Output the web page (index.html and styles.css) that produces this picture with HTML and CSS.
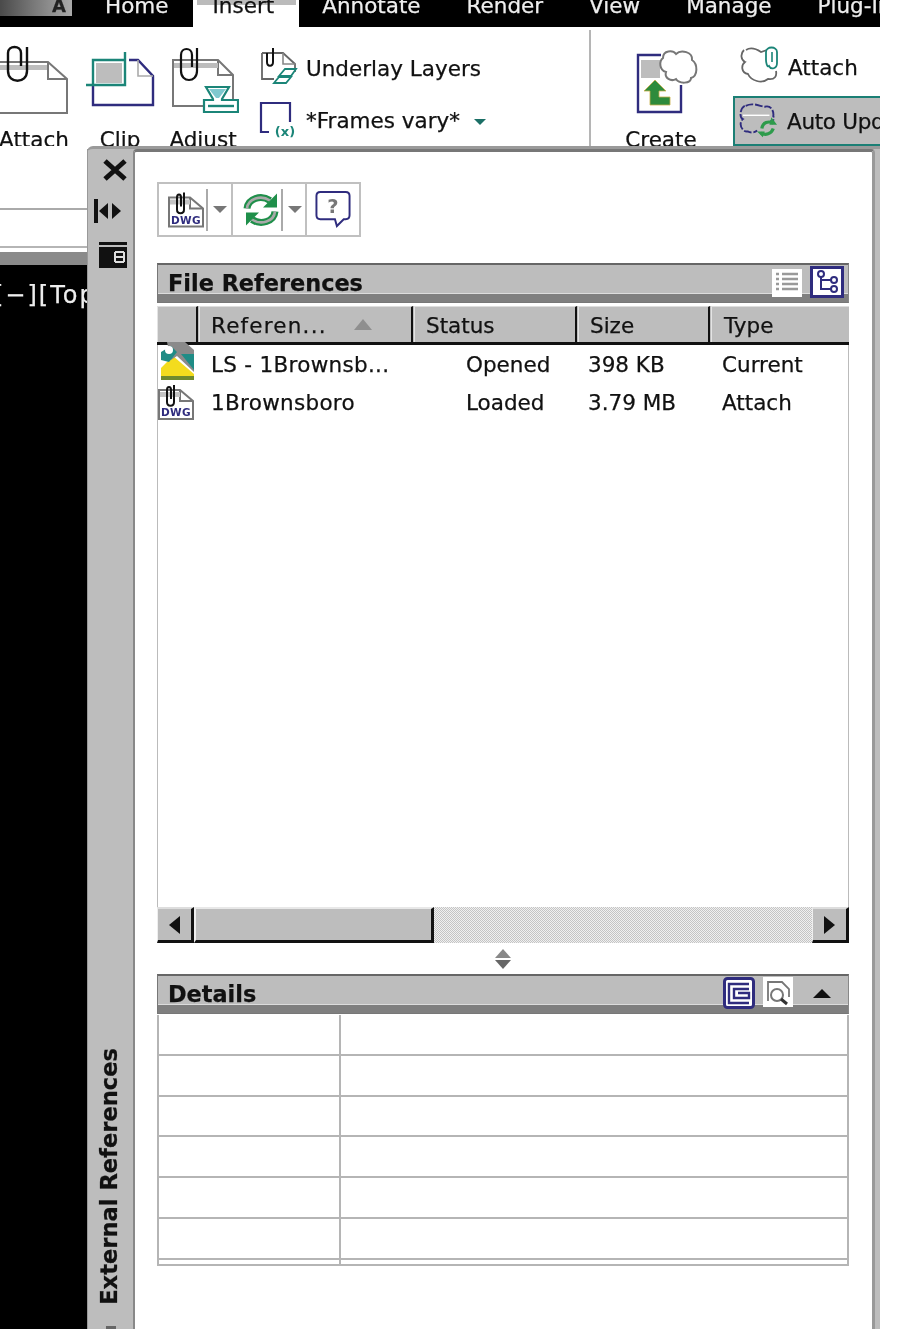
FILE: index.html
```
<!DOCTYPE html>
<html lang="en">
<head>
<meta charset="utf-8">
<title>External References</title>
<link rel="stylesheet" href="styles.css">
</head>
<body>
<svg class="defs" width="0" height="0" aria-hidden="true">
  <symbol id="dwg" viewBox="0 0 36 36">
    <path d="M1 6H22L35 17V35H1Z" fill="#fff" stroke="#777" stroke-width="2"/>
    <path d="M22 6V17H35" fill="none" stroke="#777" stroke-width="2"/>
    <rect x="2" y="8" width="20" height="5" fill="#c4c4c4"/>
    <path d="M16 1V18C16 23 9 23 9 18V6C9 2 13 2 13 6V15" fill="none" stroke="#111" stroke-width="2"/>
    <text x="18" y="32" class="dwg-text" text-anchor="middle">DWG</text>
  </symbol>
</svg>
<div class="stage">
  <nav class="tabs">
    <div class="logo"><span class="logo-a">A</span></div>
    <span class="tab">Home</span>
    <span class="tab tab-active">Insert</span>
    <span class="tab">Annotate</span>
    <span class="tab">Render</span>
    <span class="tab">View</span>
    <span class="tab">Manage</span>
    <span class="tab">Plug-In</span>
  </nav>

  <section class="ribbon">
    <div class="big-btn">
      <svg class="big-icon" viewBox="-2 44 72 72">
        <path d="M0 62H48L67 79V113H0" fill="#fff" stroke="#777" stroke-width="2"/>
        <path d="M48 62V79H67" fill="none" stroke="#777" stroke-width="2"/>
        <rect x="0" y="65" width="47" height="5" fill="#bdbdbd"/>
        <path d="M27 47V71C27 84 8 84 8 71V53C8 45 21 45 21 53V66" fill="none" stroke="#111" stroke-width="2.4"/>
      </svg>
      <span>Attach</span>
    </div>
    <div class="big-btn">
      <svg class="big-icon" viewBox="84 44 72 72">
        <path d="M93 85V105H153V76L138 60H129" fill="#fff" stroke="#2f2c7e" stroke-width="2.4"/>
        <path d="M138 60V76H153" fill="none" stroke="#aaa" stroke-width="1.6"/>
        <rect x="96" y="63" width="26" height="20" fill="#bdbdbd"/>
        <path d="M93 85V60H125M125 52V85H86" fill="none" stroke="#1b8578" stroke-width="2.4"/>
      </svg>
      <span>Clip</span>
    </div>
    <div class="big-btn">
      <svg class="big-icon" viewBox="167 44 72 72">
        <path d="M173 60H218L233 75V106H173Z" fill="#fff" stroke="#777" stroke-width="2"/>
        <path d="M218 60V75H233" fill="none" stroke="#777" stroke-width="2"/>
        <rect x="174" y="63" width="44" height="5" fill="#bdbdbd"/>
        <path d="M197 48V71C197 83 181 83 181 71V55C181 47 192 47 192 55V67" fill="none" stroke="#111" stroke-width="2.2"/>
        <path d="M206 87H229L222 99V100H238V112H204V100H213V99Z" fill="#fff" stroke="#1b8578" stroke-width="2.2"/>
        <path d="M209 89H226L219 98H216Z" fill="#7fc9cf"/>
        <path d="M208 106H234" stroke="#1b8578" stroke-width="2.4"/>
      </svg>
      <span>Adjust</span>
    </div>
    <div class="small-col">
      <div class="small-row">
        <svg class="small-icon" viewBox="258 44 40 40">
          <path d="M262 53H283L295 64V72M274 79H262V53" fill="#fff" stroke="#666" stroke-width="1.8"/>
          <path d="M283 53V64H295" fill="none" stroke="#888" stroke-width="1.6"/>
          <path d="M273 48V62C273 67 267 67 267 62V53" fill="none" stroke="#111" stroke-width="2"/>
          <path d="M279 76L285 69H296L291 76ZM274 83L279 77H291L286 83Z" fill="#fff" stroke="#1b8578" stroke-width="1.8"/>
        </svg>
        <span class="small-label">Underlay Layers</span>
      </div>
      <div class="small-row">
        <svg class="small-icon small-icon-low" viewBox="258 100 40 38">
          <path d="M269 132H261V103H290V122" fill="none" stroke="#2f2c7e" stroke-width="2.2"/>
          <text x="285" y="136" class="var-text" text-anchor="middle">(x)</text>
        </svg>
        <span class="small-label">*Frames vary*</span>
        <i class="tri-teal"></i>
      </div>
    </div>
    <div class="rib-divider"></div>
    <div class="big-btn big-create">
      <svg class="big-icon" viewBox="622 44 76 72">
        <path d="M680 85V112H637V55H660" fill="#fff" stroke="#2f2c7e" stroke-width="2.4"/>
        <rect x="640" y="60" width="19" height="18" fill="#bdbdbd"/>
        <path d="M662 58C662 50 672 50 675 54C680 49 692 52 691 60C697 64 697 76 690 78C690 84 678 84 675 79C670 82 663 78 665 72C658 70 658 61 662 58Z" fill="#fff" stroke="#777" stroke-width="2"/>
        <path d="M654 80L643 91H649V105H669V97H658V91H665Z" fill="#2e8b3c" stroke="#c8b04b" stroke-width=".8"/>
      </svg>
      <span>Create</span>
    </div>
    <div class="small-col small-col-2">
      <div class="small-row attach-row">
        <svg class="small-icon wide" viewBox="740 46 40 38">
          <path d="M746 50C752 46 758 50 761 52L767 50M744 50C740 54 741 60 745 62C741 65 741 73 748 74C751 81 762 84 768 79C775 80 777 76 776 71" fill="none" stroke="#666" stroke-width="1.8"/>
          <path d="M766 52C766 46 777 46 777 52V63C777 69 771 70 769 66C767 68 766 62 766 60Z" fill="#fff" stroke="#1b8578" stroke-width="1.8"/>
          <path d="M772 52V62" stroke="#1b8578" stroke-width="1.6"/>
        </svg>
        <span class="attach-label">Attach</span>
      </div>
      <div class="small-row auto-row">
        <svg class="small-icon wide" viewBox="739 100 42 40">
          <path d="M746 104C754 100 762 105 766 105C772 103 776 109 775 115C777 118 775 120 772 120M745 104C740 107 739 116 743 118C738 122 742 132 748 131C752 133 756 132 758 130" fill="none" stroke="#2f2c7e" stroke-width="2" stroke-dasharray="8 2"/>
          <path d="M743 114H771" stroke="#fff" stroke-width="1.5"/>
          <path d="M763 128C764 121 770 120 775 122M775 128C773 134 767 135 762 133" fill="none" stroke="#2e9b4c" stroke-width="3.4"/>
          <path d="M773 116L779 124H771ZM764 137L758 131H766Z" fill="#2e9b4c"/>
        </svg>
        <span class="auto-label">Auto Update</span>
      </div>
    </div>
  </section>

  <main class="work">
    <div class="drawing">
      <div class="draw-white"></div>
      <div class="draw-band"></div>
      <div class="draw-black"><span class="viewport-label">[−][Top]</span></div>
    </div>
    <div class="palette">
      <aside class="strip">
        <svg class="strip-icon strip-close" viewBox="0 0 24 22"><path d="M2 2L22 20M22 2L2 20" stroke="#111" stroke-width="5"/></svg>
        <svg class="strip-icon strip-auto" viewBox="0 0 30 26"><path d="M3 1V25" stroke="#111" stroke-width="4"/><path d="M15 5L6 13L15 21ZM19 5L28 13L19 21Z" fill="#111"/></svg>
        <svg class="strip-icon strip-prop" viewBox="0 0 30 26"><rect y="0" width="28" height="3" fill="#111"/><rect y="5" width="28" height="21" fill="#111"/><path d="M16 10H25M16 15H25M16 20H25M16 10V20M25 10V20" stroke="#ddd" stroke-width="2" fill="none"/></svg>
        <span class="strip-title">External References</span>
        <i class="strip-mark"></i>
      </aside>
      <div class="pane">
        <div class="toolbar">
          <div class="tool tool-a">
            <svg class="tool-icon"><use href="#dwg"/></svg>
            <i class="tool-sep"></i><i class="tri-gray"></i>
          </div>
          <div class="tool tool-b">
            <svg class="tool-icon" viewBox="0 0 36 36">
              <path d="M4 17C5 7 18 3 27 9" fill="none" stroke="#1f8f4a" stroke-width="7"/>
              <path d="M4 17C5 7 18 3 27 9" fill="none" stroke="#a9a9a9" stroke-width="2.6"/>
              <path d="M34 2V16H20Z" fill="#1f8f4a"/>
              <path d="M32 20C31 30 18 34 9 28" fill="none" stroke="#1f8f4a" stroke-width="7"/>
              <path d="M32 20C31 30 18 34 9 28" fill="none" stroke="#a9a9a9" stroke-width="2.6"/>
              <path d="M3 34V21H16Z" fill="#1f8f4a"/>
            </svg>
            <i class="tool-sep"></i><i class="tri-gray"></i>
          </div>
          <div class="tool tool-c">
            <svg class="tool-icon" viewBox="0 0 36 38">
              <path d="M5 1H31Q35 1 35 5V25Q35 29 31 29H29L22 36L20 29H5Q1 29 1 25V5Q1 1 5 1Z" fill="#fff" stroke="#2f2c7e" stroke-width="2"/>
              <text x="18" y="23" class="help-text" text-anchor="middle">?</text>
            </svg>
          </div>
        </div>

        <div class="section-head head-files">
          <span class="section-title">File References</span>
          <span class="head-tools">
            <svg class="hbtn hbtn-list" viewBox="0 0 30 28"><rect width="30" height="28" fill="#fff"/><path d="M4 5H7M10 5H26M4 10H7M10 10H26M4 15H7M10 15H26M4 20H7M10 20H26" stroke="#999" stroke-width="2.6"/></svg>
            <svg class="hbtn hbtn-tree" viewBox="0 0 34 32"><rect x="1.5" y="1.5" width="31" height="29" fill="#fff" stroke="#2f2c7e" stroke-width="3"/><path d="M11 9V23H21M11 14H21" fill="none" stroke="#2f2c7e" stroke-width="2"/><circle cx="11" cy="8" r="3" fill="#fff" stroke="#2f2c7e" stroke-width="2"/><circle cx="24" cy="14" r="3" fill="#fff" stroke="#2f2c7e" stroke-width="2"/><circle cx="24" cy="23" r="3" fill="#fff" stroke="#2f2c7e" stroke-width="2"/></svg>
          </span>
        </div>

        <div class="cols">
          <div class="col col-0"></div>
          <div class="col col-1"><span class="col-ref">Referen...</span><i class="sort-tri"></i></div>
          <div class="col col-2">Status</div>
          <div class="col col-3">Size</div>
          <div class="col col-4">Type</div>
        </div>

        <div class="list">
          <div class="row">
            <svg class="row-icon row-icon-ls" viewBox="0 0 36 38">
              <path d="M2 36V26L14 14L35 32V36Z" fill="#f3dc1e"/>
              <path d="M2 34H35V38H2Z" fill="#6f8a2e"/>
              <path d="M8 0H26L35 8V30L18 14L12 18Z" fill="#8a8a8a"/>
              <path d="M2 10L12 4L18 10L10 20L2 18ZM22 12L35 12V28Z" fill="#1f8c86"/>
              <circle cx="10" cy="8" r="4" fill="#fff"/>
            </svg>
            <span class="cell cell-name">LS - 1Brownsb...</span>
            <span class="cell cell-status">Opened</span>
            <span class="cell cell-size">398 KB</span>
            <span class="cell cell-type">Current</span>
          </div>
          <div class="row">
            <svg class="row-icon"><use href="#dwg"/></svg>
            <span class="cell cell-name">1Brownsboro</span>
            <span class="cell cell-status">Loaded</span>
            <span class="cell cell-size">3.79 MB</span>
            <span class="cell cell-type">Attach</span>
          </div>
        </div>

        <div class="scrollbar">
          <div class="sb-btn"><i class="arrow-left"></i></div>
          <div class="sb-thumb"></div>
          <div class="sb-track"></div>
          <div class="sb-btn"><i class="arrow-right"></i></div>
        </div>

        <div class="splitter"><i class="split-up"></i><i class="split-down"></i></div>

        <div class="section-head head-details">
          <span class="section-title">Details</span>
          <span class="head-tools head-tools-details">
            <svg class="dbtn" viewBox="0 0 32 32"><rect x="1.5" y="1.5" width="29" height="29" rx="3" fill="#fff" stroke="#2f2c7e" stroke-width="3"/><path d="M26 7H6V26H26M26 12H11V21H26V16H15" fill="none" stroke="#2f2c7e" stroke-width="2.4"/></svg>
            <svg class="dbtn dbtn-2" viewBox="0 0 30 30"><rect width="30" height="30" fill="#fff"/><path d="M5 24V5H19L26 12V20" fill="none" stroke="#777" stroke-width="1.8"/><circle cx="14" cy="18" r="6" fill="none" stroke="#777" stroke-width="2"/><path d="M18 22L24 27" stroke="#333" stroke-width="3"/></svg>
            <i class="collapse-tri"></i>
          </span>
        </div>

        <div class="details-grid">
          <div class="dcell"></div><div class="dcell"></div>
          <div class="dcell"></div><div class="dcell"></div>
          <div class="dcell"></div><div class="dcell"></div>
          <div class="dcell"></div><div class="dcell"></div>
          <div class="dcell"></div><div class="dcell"></div>
          <div class="dcell"></div><div class="dcell"></div>
          <div class="dcell dcell-end"></div><div class="dcell dcell-end"></div>
        </div>
      </div>
    </div>
  </main>
</div>
</body>
</html>
```

FILE: styles.css
```
* { box-sizing: border-box; }
html, body { margin: 0; padding: 0; background: #fff; }
body { width: 900px; height: 1329px; overflow: hidden; font-family: "DejaVu Sans", sans-serif; font-size: 21.5px; color: #111; -webkit-text-stroke: .25px; }
.defs { position: absolute; }
.dwg-text { font: bold 10.5px "DejaVu Sans", sans-serif; fill: #2f2c7e; letter-spacing: .3px; }
.var-text { font: bold 13px "DejaVu Sans", sans-serif; fill: #1b8578; }
.help-text { font: bold 20px "DejaVu Sans", sans-serif; fill: #777; }

.stage { width: 880px; height: 1329px; overflow: hidden; filter: blur(.45px); display: flex; flex-direction: column; background: #fff; }

/* Tabs */
.tabs { height: 27px; background: #000; color: #eee; display: flex; overflow: hidden; flex: none; }
.logo { width: 72px; height: 16px; flex: none; margin-right: 10px; background: linear-gradient(90deg, #4a4a4a, #777 45%, #aaa); display: flex; justify-content: flex-end; padding-right: 6px; }
.logo-a { color: #222; font-weight: bold; font-size: 18px; line-height: 12px; }
.tab { padding: 0 23px; flex: none; line-height: 12px; white-space: nowrap; height: 27px; position: relative; }
.tab-active { background: #fff; color: #111; margin-left: 1px; padding: 0 25px 0 20px; isolation: isolate; }
.tab-active::before { content: ""; position: absolute; left: 4px; right: 3px; top: 0; height: 5px; background: #bbb; z-index: -1; }

/* Ribbon */
.ribbon { height: 119px; flex: none; display: flex; overflow: hidden; padding-top: 17px; background: #fff; margin-left: -2px; }
.big-btn { width: 72px; display: flex; flex-direction: column; align-items: center; margin-right: 14px; flex: none; }
.big-btn:nth-child(2) { margin-right: 11px; }
.big-btn:nth-child(3) { margin-right: 19px; }
.big-btn span { margin-top: 12px; line-height: 24px; white-space: nowrap; }
.big-icon { width: 72px; height: 72px; flex: none; }
.small-col { width: 330px; display: flex; flex-direction: column; flex: none; }
.small-row { display: flex; align-items: center; height: 40px; white-space: nowrap; }
.small-row + .small-row { margin-top: 12px; }
.small-label { margin-top: 8px; }
.small-icon { width: 40px; height: 40px; margin-right: 8px; flex: none; }
.small-icon-low { height: 38px; margin-top: 6px; }
.tri-teal { width: 0; height: 0; margin-left: 14px; margin-top: 11px; border: 6px solid transparent; border-top: 6px solid #1b6f66; border-bottom: 0; }
.rib-divider { width: 2px; height: 116px; margin-top: -14px; background: #b5b5b5; flex: none; margin-left: 1px; }
.big-create { width: 76px; margin-left: 32px; margin-right: 34px; }
.big-create .big-icon { width: 76px; }
.small-col-2 { width: 150px; margin-top: 2px; }
.attach-row { height: 38px; padding-left: 7px; }
.attach-label { margin-top: 4px; }
.auto-label { letter-spacing: -.3px; }
.small-col-2 .wide { width: 40px; height: 38px; margin-right: 8px; }
.small-col-2 .auto-row { height: 50px; margin-top: 12px; margin-right: -10px; padding-left: 4px; background: #bdbdbd; border: 2px solid #1b7f75; border-right: 0; }

/* Work area */
.work { flex: 1; display: flex; min-height: 0; }
.drawing { width: 87px; flex: none; display: flex; flex-direction: column; }
.draw-white { height: 102px; background: linear-gradient(#fff 62px, #aaa 62px, #aaa 64px, #fff 64px, #fff 100px, #b5b5b5 100px); }
.draw-band { height: 17px; background: linear-gradient(#fff 4px, #8a8a8a 4px); }
.draw-black { flex: 1; background: #000; color: #eee; overflow: hidden; white-space: nowrap; padding-top: 15px; line-height: 30px; font-size: 24px; letter-spacing: 2px; }
.viewport-label { display: block; margin-left: -6px; }

.palette { width: 793px; flex: none; display: flex; position: relative; background: #bdbdbd; border-top: 3px solid #9a9a9a; border-radius: 6px 0 0 0; }
.strip { width: 46px; flex: none; display: flex; flex-direction: column; align-items: center; position: relative; border-left: 1px solid #999; }
.strip-icon { display: block; flex: none; }
.strip-close { width: 24px; height: 22px; margin: 10px 0 0 9px; }
.strip-auto { width: 30px; height: 26px; margin: 17px 5px 0 0; }
.strip-prop { width: 30px; height: 26px; margin: 18px 0 0 6px; }
.strip-title { font-weight: bold; font-size: 22.6px; writing-mode: vertical-rl; transform: rotate(180deg); white-space: nowrap; line-height: 26px; margin-top: auto; margin-bottom: 24px; margin-right: 3px; }
.strip-mark { width: 10px; height: 3px; background: #666; position: absolute; bottom: 0; left: 18px; }

.pane { width: 742px; flex: none; background: #fff; border-top: 3px solid #777; border-left: 2px solid #888; border-right: 3px solid #999; border-radius: 4px 4px 0 0; padding: 30px 24px 0 22px; display: flex; flex-direction: column; }

.toolbar { width: 204px; height: 55px; display: flex; border: 2px solid #c0c0c0; flex: none; margin-bottom: 26px; }
.tool { display: flex; align-items: center; border-right: 2px solid #c0c0c0; padding-left: 9px; }
.tool-a { width: 74px; }
.tool-b { width: 74px; padding-left: 10px; }
.tool-c { flex: 1; border-right: 0; padding-left: 8px; }
.tool-icon { width: 36px; height: 37px; flex: none; }
.tool-sep { width: 2px; height: 42px; background: #aaa; margin-left: 2px; }
.tri-gray { width: 0; height: 0; margin-left: 5px; border: 7px solid transparent; border-top: 7px solid #777; border-bottom: 0; }

.section-head { height: 40px; flex: none; width: 692px; background: linear-gradient(#bdbdbd 28px, #dcdcdc 28px, #dcdcdc 29px, #7f7f7f 29px, #7f7f7f 37px, #bdbdbd 37px); border-top: 2px solid #666; border-left: 1px solid #777; border-right: 1px solid #888; border-bottom: 1px solid #777; display: flex; align-items: flex-start; justify-content: space-between; }
.section-title { font-weight: bold; font-size: 22.4px; line-height: 32px; margin: 2px 0 0 10px; }
.head-tools { display: flex; align-items: flex-start; margin-right: 4px; padding-top: 1px; gap: 8px; }
.hbtn-list { width: 30px; height: 28px; margin-top: 3px; }
.hbtn-tree { width: 34px; height: 32px; }
.head-tools-details { gap: 8px; margin-right: 17px; }
.dbtn { width: 32px; height: 32px; }
.dbtn-2 { width: 30px; height: 30px; }
.collapse-tri { width: 0; height: 0; margin: 12px 0 0 12px; border: 9px solid transparent; border-bottom: 9px solid #111; border-top: 0; }

.cols { width: 692px; height: 39px; flex: none; margin-top: 3px; display: flex; background: #bdbdbd; border-bottom: 3px solid #111; }
.col { height: 36px; line-height: 38px; padding-left: 10px; border-top: 1px solid #ddd; border-left: 1px solid #e4e4e4; border-right: 2px solid #111; margin-right: 1px; white-space: nowrap; display: flex; }
.col-0 { width: 41px; }
.col-1 { width: 214px; padding-left: 11px; }
.col-ref { flex: none; letter-spacing: 1.2px; }
.col-2 { width: 163px; padding-left: 11px; }
.col-3 { width: 132px; padding-left: 11px; }
.col-4 { flex: 1; border-right: 0; margin-right: 0; padding-left: 12px; }
.sort-tri { width: 0; height: 0; margin: 12px 0 0 27px; border: 9px solid transparent; border-bottom: 11px solid #8f8f8f; border-top: 0; }

.list { width: 692px; height: 562px; flex: none; border-left: 1px solid #bbb; border-right: 1px solid #bbb; }
.row { height: 38px; display: flex; align-items: center; white-space: nowrap; position: relative; }
.row-icon { width: 36px; height: 36px; flex: none; margin-right: 17px; }
.row-icon-ls { height: 38px; margin-left: 1px; margin-right: 16px; margin-top: -6px; }
.cell { display: block; flex: none; }
.cell-name { width: 255px; letter-spacing: .3px; }
.cell-status { width: 122px; }
.cell-size { width: 134px; }

.scrollbar { width: 692px; height: 36px; flex: none; display: flex; }
.sb-btn { width: 37px; background: #bdbdbd; border-top: 2px solid #ddd; border-left: 1px solid #eee; border-right: 3px solid #111; border-bottom: 3px solid #111; display: flex; align-items: center; justify-content: center; flex: none; }
.sb-thumb { width: 240px; background: #bdbdbd; border-top: 2px solid #e8e8e8; border-left: 2px solid #eee; border-right: 3px solid #111; border-bottom: 3px solid #111; flex: none; }
.sb-track { flex: 1; background: repeating-conic-gradient(#c4c4c4 0 25%, #f0f0f0 0 50%) 0 0 / 2px 2px; }
.arrow-left { width: 0; height: 0; border: 9px solid transparent; border-right: 11px solid #111; border-left: 0; }
.arrow-right { width: 0; height: 0; border: 9px solid transparent; border-left: 11px solid #111; border-right: 0; }

.splitter { width: 692px; height: 31px; flex: none; display: flex; flex-direction: column; align-items: center; justify-content: center; gap: 2px; padding-top: 1px; }
.split-up { width: 0; height: 0; border: 8px solid transparent; border-bottom: 9px solid #888; border-top: 0; }
.split-down { width: 0; height: 0; border: 8px solid transparent; border-top: 9px solid #666; border-bottom: 0; }

.details-grid { width: 692px; flex: none; display: grid; grid-template-columns: 182px 1fr; grid-template-rows: repeat(6, 40.8px) 4px; border-left: 2px solid #b5b5b5; border-right: 2px solid #b5b5b5; border-bottom: 2px solid #b5b5b5; margin-top: 1px; }
.dcell { border-bottom: 2px solid #b5b5b5; }
.dcell:nth-child(odd) { border-right: 2px solid #b5b5b5; }
.dcell-end { border-bottom: 0; }
```
